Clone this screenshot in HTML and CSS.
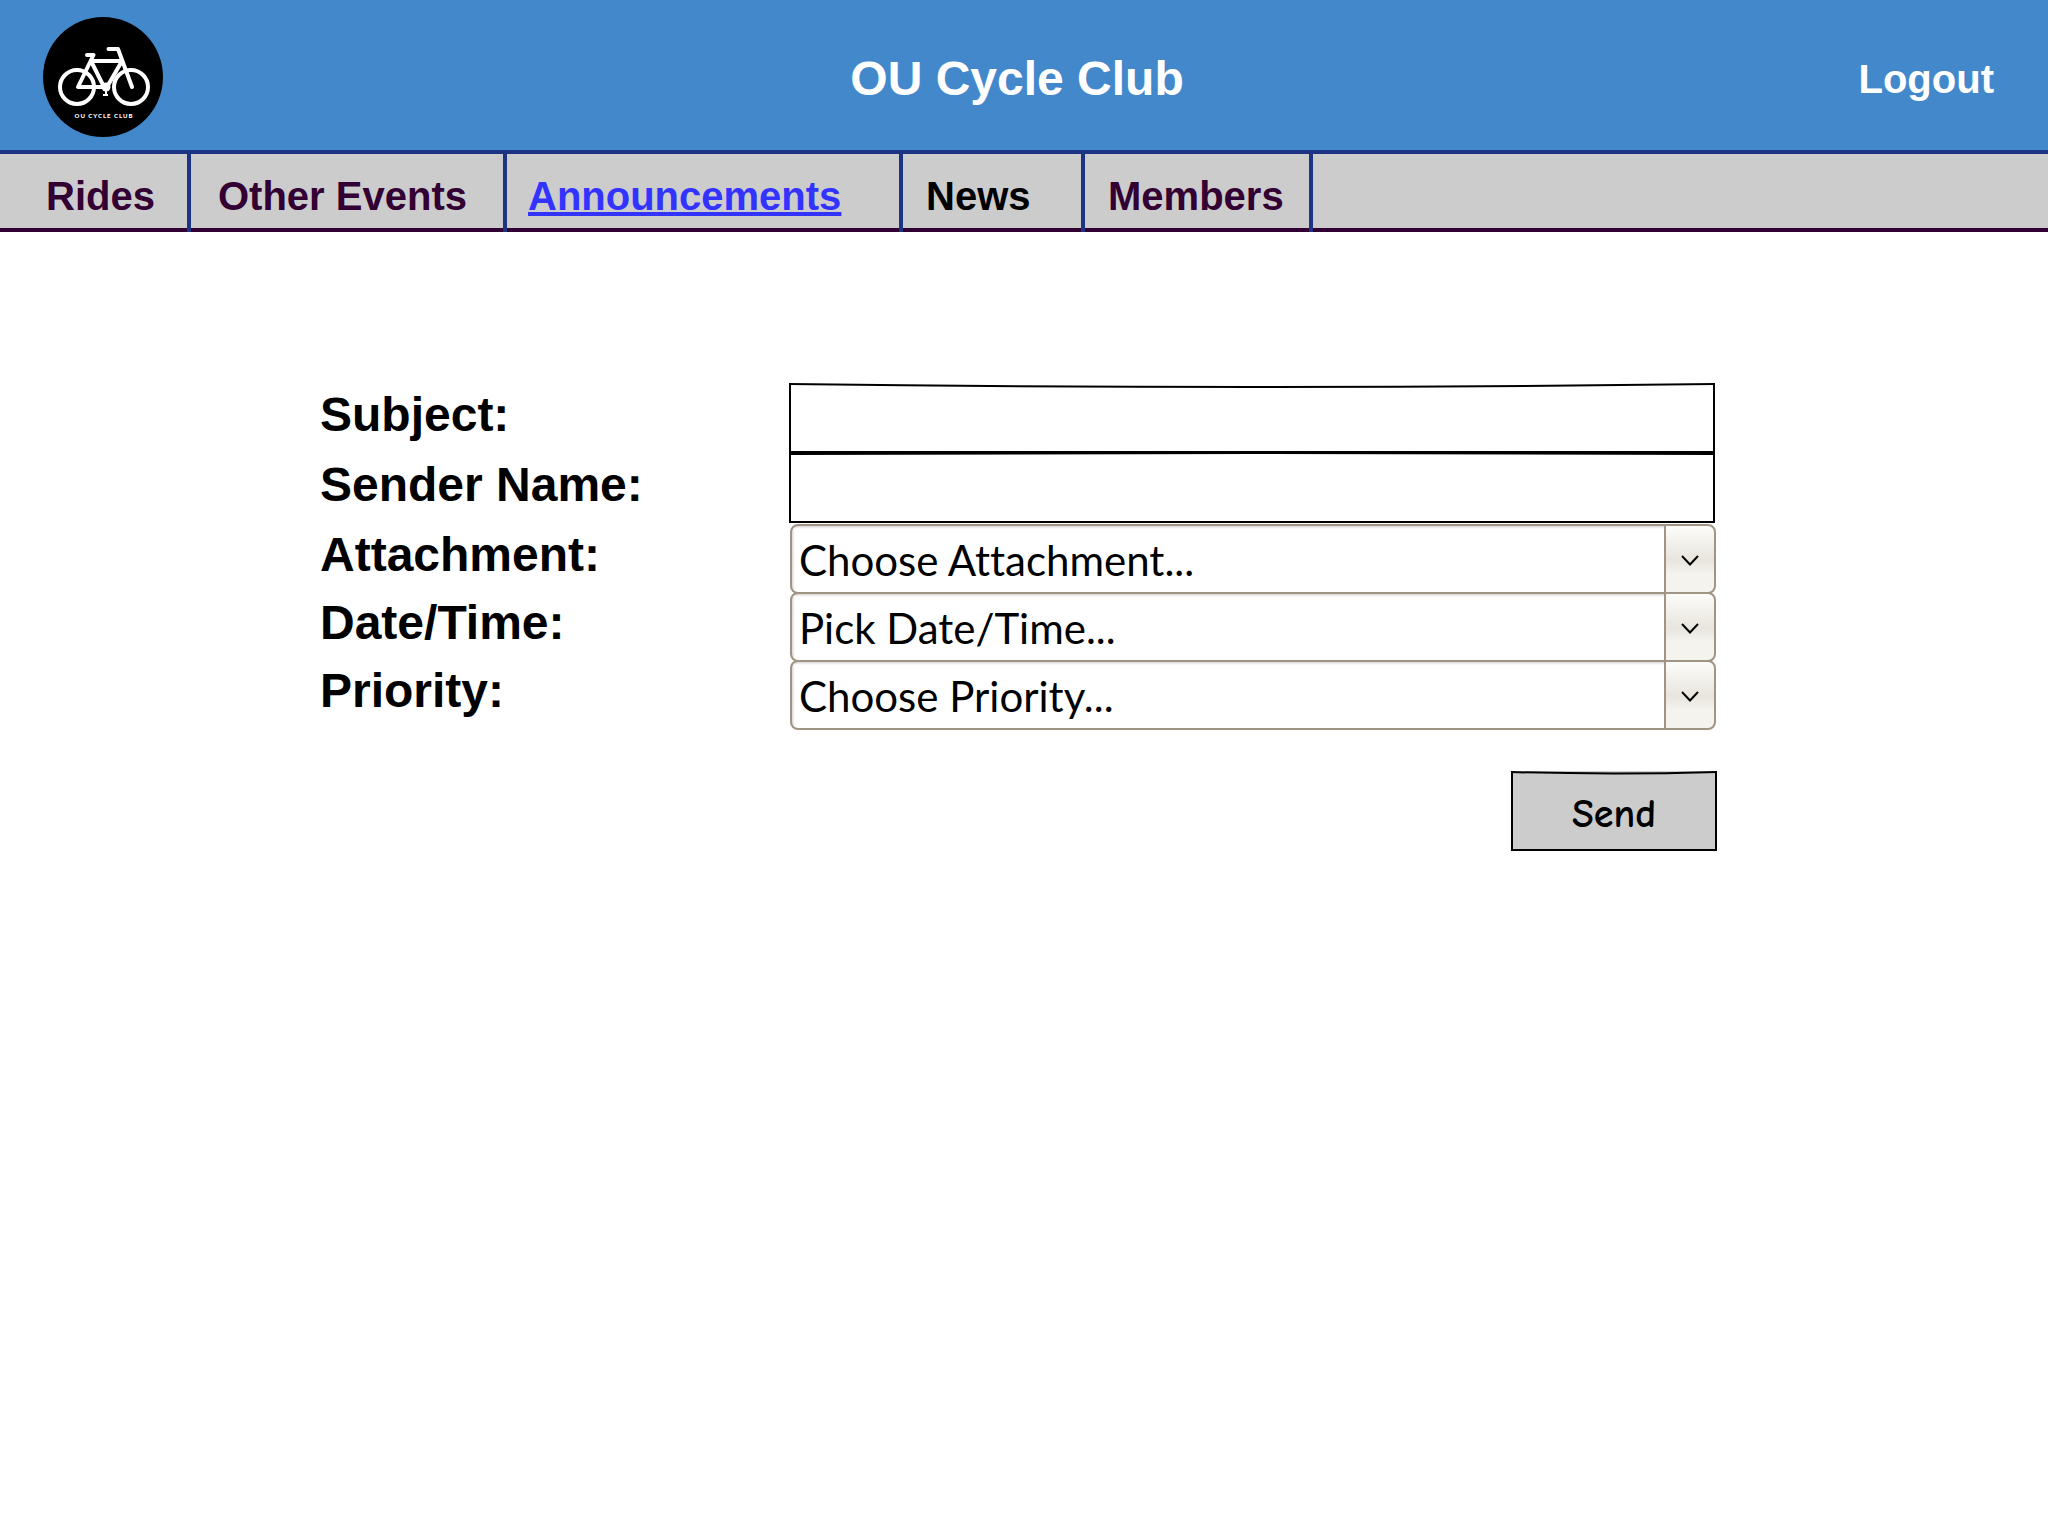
FILE: index.html
```html
<!DOCTYPE html>
<html lang="en">
<head>
<meta charset="utf-8">
<meta name="viewport" content="width=device-width, initial-scale=1">
<title>OU Cycle Club – Announcements</title>
<link rel="stylesheet" href="styles.css">
</head>
<body>
<header class="banner">
  <svg class="logo" viewBox="0 0 120 120" role="img" aria-label="OU Cycle Club logo">
    <circle cx="60" cy="60" r="60" fill="#000"/>
    <g fill="none" stroke="#fff" stroke-width="4" stroke-linecap="round" stroke-linejoin="round">
      <circle cx="34" cy="70" r="17"/>
      <circle cx="88" cy="70" r="17"/>
      <path d="M44 38h6.500M50.500 38L35 70H61L48 44H79L64 70M75 32h-0.500H65.500M75 32L89 70"/>
    </g>
    <circle cx="63" cy="70" r="4.500" fill="#fff"/>
    <path d="M63 70v8M60 78h5" stroke="#fff" stroke-width="2" fill="none"/>
    <text class="logo-text" x="61" y="101" text-anchor="middle">OU CYCLE CLUB</text>
  </svg>
  <h1 class="title">OU Cycle Club</h1>
  <a class="logout" href="#">Logout</a>
</header>
<nav class="tabs" aria-label="Main">
  <ul class="tab-list">
    <li class="tab tab-first"><a href="#">Rides</a></li>
    <li class="tab tab-events"><a href="#">Other Events</a></li>
    <li class="tab tab-current"><a href="#" aria-current="page">Announcements</a></li>
    <li class="tab tab-news"><a href="#">News</a></li>
    <li class="tab"><a href="#">Members</a></li>
  </ul>
</nav>
<main class="content">
  <form class="form">
    <label class="label" for="subject">Subject:</label>
    <div class="sketch">
      <input class="text-input" id="subject" type="text">
      <svg class="sketch-line" viewBox="0 0 100 6" preserveAspectRatio="none" aria-hidden="true"><path d="M0 1Q50 7 100 1"/></svg>
    </div>
    <label class="label" for="sender">Sender Name:</label>
    <div class="sketch">
      <input class="text-input" id="sender" type="text">
      <svg class="sketch-line" viewBox="0 0 100 6" preserveAspectRatio="none" aria-hidden="true"><path d="M0 1Q50 -1 100 1"/></svg>
    </div>
    <label class="label" for="attachment">Attachment:</label>
    <div class="picker">
      <select class="select" id="attachment"><option>Choose Attachment...</option></select>
      <svg class="chevron" viewBox="0 0 18 11" aria-hidden="true"><path d="M1 1l8 8.500L17 1"/></svg>
    </div>
    <label class="label" for="datetime">Date/Time:</label>
    <div class="picker">
      <select class="select" id="datetime"><option>Pick Date/Time...</option></select>
      <svg class="chevron" viewBox="0 0 18 11" aria-hidden="true"><path d="M1 1l8 8.500L17 1"/></svg>
    </div>
    <label class="label" for="priority">Priority:</label>
    <div class="picker">
      <select class="select" id="priority"><option>Choose Priority...</option></select>
      <svg class="chevron" viewBox="0 0 18 11" aria-hidden="true"><path d="M1 1l8 8.500L17 1"/></svg>
    </div>
    <div class="sketch actions">
      <button class="send" type="submit">Send</button>
      <svg class="sketch-line" viewBox="0 0 100 6" preserveAspectRatio="none" aria-hidden="true"><path d="M0 1Q50 4 100 1"/></svg>
    </div>
  </form>
</main>
</body>
</html>
```
FILE: styles.css
```css
* { box-sizing: border-box; }

body {
  margin: 0;
  background: #fff;
  color: #000;
  font-family: "Liberation Sans", Arial, sans-serif;
}

.banner {
  display: grid;
  grid-template-columns: 1fr auto 1fr;
  align-items: center;
  padding: 17px 54px 13px 40px;
  background: #4488cc;
  color: #fff;
}

.logo { display: block; width: 120px; height: 120px; margin-left: 3px; }
.logo-text {
  fill: #fff;
  font: 900 6px Lato, sans-serif;
  letter-spacing: 1px;
}

.title { margin: 0; padding-top: 4px; font-size: 48px; line-height: 56px; }

.logout {
  justify-self: end;
  padding-top: 4px;
  color: inherit;
  font-size: 40px;
  font-weight: bold;
  line-height: 44px;
  text-decoration: none;
}

.tabs {
  border-top: 4px solid #1c3483;
  border-bottom: 4px solid #330033;
  background: #ccc;
}

.tab-list {
  display: grid;
  grid-template-columns: 191px 316px 396px 182px 228px;
  margin: 0 0 -4px;
  padding: 0;
  list-style: none;
}

.tab {
  padding: 20px 0 14px 23px;
  border-right: 4px solid #1c3483;
  color: #330033;
  font-size: 40px;
  font-weight: bold;
  line-height: 44px;
}
.tab a { color: inherit; text-decoration: none; }
.tab-first { padding-left: 46px; }
.tab-events { padding-left: 27px; }
.tab-news { color: #000; }
.tab-current { padding-left: 21px; color: #3333ff; }
.tab-current a {
  text-decoration: underline;
  text-decoration-thickness: 4px;
  text-underline-offset: 2px;
}

.content { padding: 151px 332px 40px 320px; }

.form {
  display: grid;
  grid-template-columns: 469px 1fr;
  grid-template-rows: 70px 70px 68px 68px 71px;
}

.label { font-size: 48px; font-weight: bold; line-height: 63px; }

.sketch { position: relative; margin-right: 1px; }

.text-input {
  display: block;
  width: 100%;
  height: 70px;
  padding: 0 8px;
  border: 2px solid #000;
  border-top: 0;
  border-radius: 0;
  outline: 0;
  background: #fff;
  font-size: 40px;
}

.sketch-line {
  position: absolute;
  top: 0;
  left: 0;
  width: 100%;
  height: 6px;
  overflow: visible;
  pointer-events: none;
}
.sketch-line path {
  fill: none;
  stroke: #000;
  stroke-width: 2px;
  vector-effect: non-scaling-stroke;
}

.picker { position: relative; margin: 1px 0 0 1px; }

.select {
  display: block;
  width: 100%;
  height: 70px;
  padding: 1px 60px 0 7px;
  border: 2px solid #a09483;
  border-radius: 8px;
  outline: 0;
  appearance: none;
  background:
    linear-gradient(#a09483, #a09483) right 48px top / 2px 100% no-repeat,
    linear-gradient(#fcfcfa, #e8e5dd 52%, #f4f3ee 72%, #f4f3ee) right top / 48px 100% no-repeat,
    linear-gradient(#d8d8d8, #fff) left top / 100% 3px no-repeat,
    linear-gradient(90deg, #d8d8d8, #fff) left top / 3px 100% no-repeat,
    #fff;
  color: #000;
  font-family: Lato, Carlito, sans-serif;
  font-size: 42px;
  font-variant-ligatures: none;
}

.chevron {
  position: absolute;
  top: 31px;
  right: 17px;
  width: 18px;
  height: 11px;
  fill: none;
  stroke: #000;
  stroke-width: 2px;
  pointer-events: none;
}

.actions {
  grid-column: 2;
  justify-self: end;
  margin: 41px -1px 0 0;
}

.send {
  display: block;
  width: 206px;
  height: 80px;
  padding: 8px 0 0;
  border: 2px solid #000;
  border-top: 0;
  background: #ccc;
  color: #000;
  font-family: "Comic Neue", "Comic Sans MS", "Comic Relief", cursive;
  font-size: 40px;
  font-weight: bold;
}
```
